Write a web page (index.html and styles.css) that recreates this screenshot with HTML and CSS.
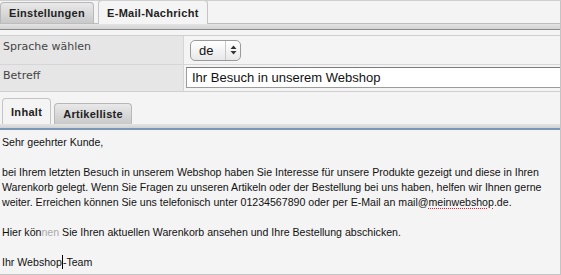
FILE: index.html
```html
<!DOCTYPE html>
<html lang="de">
<head>
  <meta charset="UTF-8">
  <title>E-Mail-Nachricht</title>
  <link rel="stylesheet" href="styles.css">
</head>
<body>
  <div class="panel">
    <div class="tabbar">
      <div class="tab">Einstellungen</div>
      <div class="tab active">E-Mail-Nachricht</div>
    </div>
    <div class="strip"></div>

    <div class="form">
      <div class="row row-lang">
        <div class="label">Sprache wählen</div>
        <div class="value">
          <div class="select">
            <span>de</span>
            <span class="arrows">
              <svg width="7" height="10" viewBox="0 0 7 10"><path d="M3.5 0.5 L6.5 4 H0.5 Z M3.5 9.5 L6.5 6 H0.5 Z" fill="#333"/></svg>
            </span>
          </div>
        </div>
      </div>
      <div class="row row-subject">
        <div class="label">Betreff</div>
        <div class="value">
          <div class="input">Ihr Besuch in unserem Webshop</div>
        </div>
      </div>
    </div>

    <div class="tabbar sub">
      <div class="tab active">Inhalt</div>
      <div class="tab">Artikelliste</div>
    </div>
    <div class="strip blue"></div>

    <div class="editor">
      <p>Sehr geehrter Kunde,</p>
      <p>bei Ihrem letzten Besuch in unserem Webshop haben Sie Interesse für unsere Produkte gezeigt und diese in Ihren Warenkorb gelegt. Wenn Sie Fragen zu unseren Artikeln oder der Bestellung bei uns haben, helfen wir Ihnen gerne weiter. Erreichen können Sie uns telefonisch unter 01234567890 oder per E-Mail an mail@<span class="spell">meinwebshop</span>.de.</p>
      <p>Hier kön<span class="faded">nen</span> Sie Ihren aktuellen Warenkorb ansehen und Ihre Bestellung abschicken.</p>
      <p>Ihr Webshop<span class="caret"></span>-Team</p>
    </div>
  </div>
</body>
</html>
```

FILE: styles.css
```css
* {
  box-sizing: border-box;
}

body {
  margin: 0;
  background: #fff;
  font-family: "DejaVu Sans", sans-serif;
  font-size: 11px;
  color: #222;
}

.panel {
  width: 561px;
  height: 275px;
  background: #f4f4f4;
  border-top: 1px solid #cfcfcf;
  border-right: 1px solid #c4c4c4;
  border-bottom: 1px solid #c4c4c4;
  overflow: hidden;
}

.tabbar {
  display: flex;
  align-items: flex-end;
  gap: 4px;
  height: 23px;
  border-bottom: 1px solid #bdbdbd;
}

.tab {
  height: 21px;
  padding: 0 8px;
  display: flex;
  align-items: center;
  font-family: "Liberation Sans", sans-serif;
  font-size: 11px;
  letter-spacing: 0.3px;
  font-weight: bold;
  color: #222;
  background: linear-gradient(#e9e9e9, #c9c9c9);
  border: 1px solid #b8b8b8;
  border-bottom: none;
  border-radius: 4px 4px 0 0;
}

.tab.active {
  height: 24px;
  margin-bottom: -1px;
  background: #f4f4f4;
  border-color: #c4c4c4;
}

.strip {
  height: 6px;
  background: linear-gradient(#e2e2e2, #d4d4d4);
  border-bottom: 1px solid #8c8c8c;
}

.form {
  margin-top: 5px;
  border-top: 1px solid #cfcfcf;
  border-bottom: 1px solid #cfcfcf;
}

.row {
  display: flex;
}

.row + .row {
  border-top: 1px solid #d6d6d6;
}

.row-lang {
  height: 28px;
}

.row-subject {
  height: 27px;
}

.label {
  width: 184px;
  padding: 4px 3px;
  background: #e6e6e6;
  border-right: 1px solid #d6d6d6;
  color: #444;
}

.value {
  flex: 1;
  display: flex;
  align-items: center;
  padding-left: 5px;
}

.row-lang .value {
  padding-left: 6px;
}

.select {
  display: flex;
  align-items: center;
  width: 51px;
  height: 21px;
  border: 1px solid #9a9a9a;
  border-radius: 5px;
  background: linear-gradient(#ffffff, #e8e8e8);
  font-family: "Liberation Sans", sans-serif;
  font-size: 13px;
  color: #111;
}

.select span:first-child {
  flex: 1;
  padding-left: 8px;
}

.arrows {
  width: 15px;
  height: 100%;
  display: flex;
  align-items: center;
  justify-content: center;
  border-left: 1px solid #c8c8c8;
}

.row-subject .value {
  padding-left: 2px;
  align-items: flex-start;
  padding-top: 2px;
}

.input {
  flex: 1;
  height: 21px;
  padding: 2px 5px;
  background: #fff;
  border: 1px solid #9c9c9c;
  border-top-color: #7a7a7a;
  border-right: none;
  font-family: "Liberation Sans", sans-serif;
  font-size: 13px;
  color: #111;
}

.tabbar.sub {
  margin-top: 6px;
  height: 26px;
  padding-left: 2px;
  gap: 3px;
  border-bottom: none;
}

.tabbar.sub .tab.active {
  height: 26px;
  margin-bottom: 0;
}

.strip.blue {
  height: 6px;
  background: linear-gradient(#e4e4e4, #d2d2d2);
  border-bottom: 2px solid #7b97b6;
}

.editor {
  padding: 5px 2px;
  font-family: "Liberation Sans", sans-serif;
  font-size: 10.6px;
  line-height: 15px;
  color: #111;
}

.editor p {
  margin: 0 0 15px;
}

.spell {
  text-decoration: underline dotted #d23;
  text-underline-offset: 2px;
}

.faded {
  color: #aaa;
}

.caret {
  display: inline-block;
  width: 1px;
  height: 14px;
  margin-bottom: -3px;
  background: #000;
}
```
